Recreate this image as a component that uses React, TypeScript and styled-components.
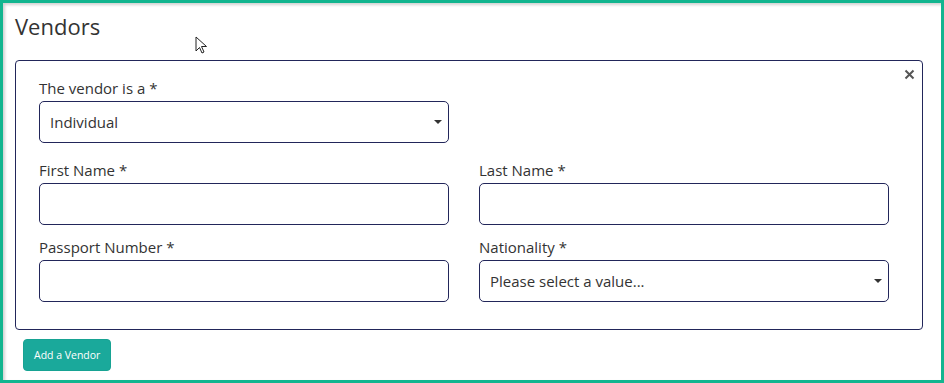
import React from 'react';
import styled, { createGlobalStyle } from 'styled-components';

const GlobalStyle = createGlobalStyle`
  html, body {
    margin: 0;
    padding: 0;
    background: #fff;
  }
  body {
    font-family: "Open Sans", "Noto Sans", sans-serif;
    color: #333;
  }
`;

const Frame = styled.div`
  position: relative;
  box-sizing: border-box;
  width: 944px;
  height: 383px;
  border: 3px solid #12b58f;
  box-shadow: inset 2px 2px 3px rgba(0, 0, 0, 0.18);
  padding: 8px 0 0 12px;
`;

const Title = styled.h1`
  margin: 0 0 19px;
  font-size: 22px;
  font-weight: 400;
  line-height: 30px;
  color: #333;
`;

const Card = styled.div`
  position: relative;
  box-sizing: border-box;
  width: 908px;
  height: 270px;
  border: 1px solid #22265a;
  border-radius: 4px;
  padding: 18px 0 0 23px;
`;

const Close = styled.button`
  position: absolute;
  top: 5px;
  right: 5px;
  border: none;
  background: none;
  padding: 0;
  width: 16px;
  height: 16px;
  cursor: pointer;
  display: flex;
  align-items: center;
  justify-content: center;
`;

const Grid = styled.div`
  display: grid;
  grid-template-columns: 410px 410px;
  column-gap: 30px;
  row-gap: 13px;
`;

const Field = styled.div<{ $first?: boolean }>`
  display: flex;
  flex-direction: column;
  margin-bottom: ${(p) => (p.$first ? '5px' : '0')};
`;

const Label = styled.label`
  font-size: 15px;
  line-height: 18px;
  margin-bottom: 4px;
  color: #333;
`;

const Box = styled.div`
  position: relative;
  box-sizing: border-box;
  height: 42px;
  border: 1px solid #22265a;
  border-radius: 5px;
  display: flex;
  align-items: center;
  padding: 0 10px;
  font-size: 15px;
  color: #333;
`;

const Caret = styled.span`
  position: absolute;
  right: 6px;
  top: 18px;
  width: 0;
  height: 0;
  border-left: 4px solid transparent;
  border-right: 4px solid transparent;
  border-top: 4px solid #333;
`;

const Button = styled.button`
  margin: 9px 0 0 8px;
  height: 32px;
  padding: 0 10px;
  border: 1px solid #17a393;
  border-radius: 4px;
  background: #1aa99b;
  color: #fff;
  font-family: "Open Sans", "Noto Sans", sans-serif;
  font-size: 10.5px;
  cursor: pointer;
`;

const Pointer = styled.svg`
  position: absolute;
  left: 192px;
  top: 33px;
`;

const Select = ({ value }: { value: string }) => (
  <Box>
    {value}
    <Caret />
  </Box>
);

const App = () => {
  return (
    <>
      <GlobalStyle />
      <Frame>
        <Title>Vendors</Title>
        <Card>
          <Close aria-label="close">
            <svg width="11" height="11" viewBox="0 0 11 11">
              <path d="M1.5 1.5 L9.5 9.5 M9.5 1.5 L1.5 9.5" stroke="#555" strokeWidth="2" />
            </svg>
          </Close>
          <Grid>
            <Field $first>
              <Label>The vendor is a *</Label>
              <Select value="Individual" />
            </Field>
            <div />
            <Field>
              <Label>First Name *</Label>
              <Box />
            </Field>
            <Field>
              <Label>Last Name *</Label>
              <Box />
            </Field>
            <Field>
              <Label>Passport Number *</Label>
              <Box />
            </Field>
            <Field>
              <Label>Nationality *</Label>
              <Select value="Please select a value..." />
            </Field>
          </Grid>
        </Card>
        <Button>Add a Vendor</Button>
        <Pointer width="13" height="19" viewBox="0 0 13 19">
          <path d="M1 1 L1 15 L4.5 11.5 L7 17 L9 16 L6.5 10.5 L11.5 10.5 Z" fill="#fff" stroke="#222" strokeWidth="1" strokeLinejoin="round" />
        </Pointer>
      </Frame>
    </>
  );
};

export default App;
